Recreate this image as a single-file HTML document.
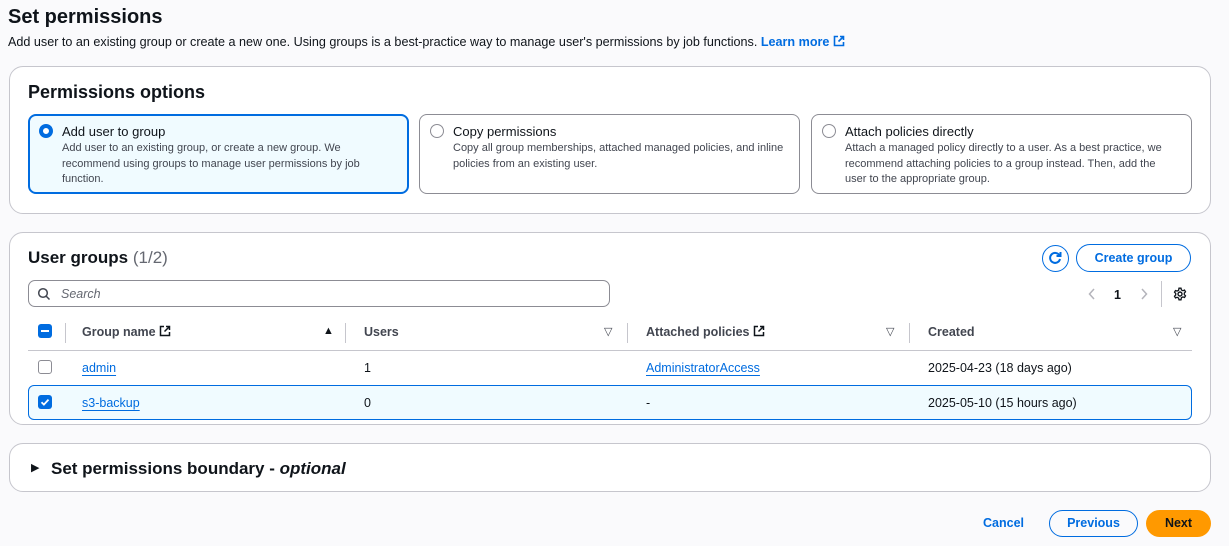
<!DOCTYPE html>
<html><head><meta charset="utf-8"><style>
*{box-sizing:border-box;margin:0;padding:0}
body{width:1229px;height:546px;background:#fafafc;font-family:"Liberation Sans",sans-serif;color:#0f141a;position:relative;overflow:hidden}
.a{position:absolute;white-space:nowrap}
.panel{position:absolute;background:#fff;border:1px solid #c6c6cd;border-radius:14px}
.card{position:absolute;top:114px;height:80px;width:381px;border:1px solid #8c8c94;border-radius:8px;background:#fff}
.card.sel{border:2px solid #006ce0;background:#f0fbff}
.radio{position:absolute;left:10px;top:9px;width:14px;height:14px;border-radius:50%;border:1px solid #8c8c94;background:#fff}
.sel .radio{border:4px solid #006ce0;left:9px;top:8px}
.ct{position:absolute;left:33px;top:9px;font-size:13px;white-space:nowrap}
.cd{position:absolute;left:33px;top:26px;font-size:11px;color:#424650;line-height:15.5px;white-space:nowrap}
.lnk{color:#006ce0;text-decoration:underline;text-underline-offset:3px}
.th{font-size:12.5px;font-weight:bold;color:#424650;top:325px}
.sep{position:absolute;top:323px;width:1px;height:20px;background:#c6c6cd}
.tri{position:absolute;font-size:11px;color:#424650;top:325px}
.cell{font-size:12.5px;position:absolute;white-space:nowrap}
.cb{position:absolute;width:14px;height:14px;border-radius:3px}
</style></head><body>
<div class="a" style="left:8px;top:6px;font-size:20px;font-weight:bold">Set permissions</div>
<div class="a" style="left:8px;top:35px;font-size:12.6px;color:#0f141a">Add user to an existing group or create a new one. Using groups is a best-practice way to manage user's permissions by job functions. <span style="color:#006ce0;font-weight:bold">Learn more</span> <svg width="12" height="12" viewBox="0 0 12 12" style="vertical-align:-1px"><path d="M5 1.5H1.5v9h9V7M7 1.5h3.5V5M10.5 1.5L5.5 6.5" fill="none" stroke="#006ce0" stroke-width="1.6"/></svg></div>

<div class="panel" style="left:9px;top:66px;width:1202px;height:148px"></div>
<div class="a" style="left:28px;top:82px;font-size:18px;font-weight:bold">Permissions options</div>
<div class="card sel" style="left:28px"><div class="radio"></div><div class="ct" style="left:32px;top:8px">Add user to group</div><div class="cd" style="left:32px;top:25px">Add user to an existing group, or create a new group. We<br>recommend using groups to manage user permissions by job<br>function.</div></div>
<div class="card" style="left:419px"><div class="radio"></div><div class="ct">Copy permissions</div><div class="cd">Copy all group memberships, attached managed policies, and inline<br>policies from an existing user.</div></div>
<div class="card" style="left:811px"><div class="radio"></div><div class="ct">Attach policies directly</div><div class="cd">Attach a managed policy directly to a user. As a best practice, we<br>recommend attaching policies to a group instead. Then, add the<br>user to the appropriate group.</div></div>

<div class="panel" style="left:9px;top:232px;width:1202px;height:193px"></div>
<div class="a" style="left:28px;top:248px;font-size:17px;font-weight:bold">User groups <span style="font-weight:normal;color:#656871">(1/2)</span></div>
<div class="a" style="left:1042px;top:245px;width:27px;height:27px;border:1.5px solid #006ce0;border-radius:50%"><svg width="24" height="24" viewBox="0 0 24 24"><path d="M16.5 9.5A5 5 0 1 0 17 13" fill="none" stroke="#006ce0" stroke-width="2"/><path d="M17.5 6v4h-4" fill="none" stroke="#006ce0" stroke-width="2"/></svg></div>
<div class="a" style="left:1076px;top:244px;width:115px;height:28px;border:1.5px solid #006ce0;border-radius:14px;color:#006ce0;font-weight:bold;font-size:12.5px;text-align:center;line-height:26px">Create group</div>
<div class="a" style="left:28px;top:280px;width:582px;height:27px;border:1px solid #8c8c94;border-radius:7px;background:#fff"></div>
<svg class="a" style="left:37px;top:287px" width="14" height="14" viewBox="0 0 14 14"><circle cx="6" cy="6" r="4.3" fill="none" stroke="#424650" stroke-width="1.5"/><path d="M9 9l3.5 3.5" stroke="#424650" stroke-width="1.5"/></svg>
<div class="a" style="left:61px;top:287px;font-size:12.5px;font-style:italic;color:#656871">Search</div>
<svg class="a" style="left:1088px;top:288px" width="8" height="12" viewBox="0 0 8 12"><path d="M6 1L1.5 6 6 11" fill="none" stroke="#b4b4bb" stroke-width="1.5"/></svg>
<div class="a" style="left:1114px;top:288px;font-size:12.5px;font-weight:bold">1</div>
<svg class="a" style="left:1140px;top:288px" width="8" height="12" viewBox="0 0 8 12"><path d="M2 1l4.5 5L2 11" fill="none" stroke="#b4b4bb" stroke-width="1.5"/></svg>
<div class="a" style="left:1161px;top:281px;width:1px;height:26px;background:#c6c6cd"></div>
<svg class="a" style="left:1173px;top:287px" width="14" height="14" viewBox="0 0 14 14"><circle cx="7" cy="7" r="2" fill="none" stroke="#0f141a" stroke-width="1.4"/><path d="M6 1.2h2l.4 1.7 1.5.8 1.6-.6 1 1.7-1.2 1.2v1.6l1.2 1.2-1 1.7-1.6-.6-1.5.8L8 12.8H6l-.4-1.7-1.5-.8-1.6.6-1-1.7 1.2-1.2V6.4L1.5 5.2l1-1.7 1.6.6 1.5-.8z" fill="none" stroke="#0f141a" stroke-width="1.3"/></svg>

<div class="cb" style="left:38px;top:324px;background:#006ce0"><div style="position:absolute;left:3px;top:6px;width:8px;height:2px;background:#fff"></div></div>
<div class="sep" style="left:65px"></div>
<div class="a th" style="left:82px">Group name <svg width="12" height="12" viewBox="0 0 12 12" style="vertical-align:-1px"><path d="M5 1.5H1.5v9h9V7M7 1.5h3.5V5M10.5 1.5L5.5 6.5" fill="none" stroke="#0f141a" stroke-width="1.5"/></svg></div>
<div class="tri" style="left:323px;color:#0f141a">&#9650;</div>
<div class="sep" style="left:345px"></div>
<div class="a th" style="left:364px">Users</div>
<div class="tri" style="left:604px">&#9661;</div>
<div class="sep" style="left:627px"></div>
<div class="a th" style="left:646px">Attached policies <svg width="12" height="12" viewBox="0 0 12 12" style="vertical-align:-1px"><path d="M5 1.5H1.5v9h9V7M7 1.5h3.5V5M10.5 1.5L5.5 6.5" fill="none" stroke="#0f141a" stroke-width="1.5"/></svg></div>
<div class="tri" style="left:886px">&#9661;</div>
<div class="sep" style="left:909px"></div>
<div class="a th" style="left:928px">Created</div>
<div class="tri" style="left:1173px">&#9661;</div>
<div class="a" style="left:28px;top:350px;width:1164px;height:1px;background:#c6c6cd"></div>

<div class="cb" style="left:38px;top:360px;border:1px solid #8c8c94;background:#fff"></div>
<div class="cell lnk" style="left:82px;top:361px">admin</div>
<div class="cell" style="left:364px;top:361px">1</div>
<div class="cell lnk" style="left:646px;top:361px">AdministratorAccess</div>
<div class="cell" style="left:928px;top:361px">2025-04-23 (18 days ago)</div>

<div class="a" style="left:28px;top:385px;width:1164px;height:35px;border:1px solid #006ce0;border-radius:6px;background:#f0fbff"></div>
<div class="cb" style="left:38px;top:395px;background:#006ce0"><svg width="14" height="14" viewBox="0 0 14 14" style="position:absolute;left:0;top:0"><path d="M3.5 7.2l2.4 2.4 4.6-5" fill="none" stroke="#fff" stroke-width="1.8"/></svg></div>
<div class="cell lnk" style="left:82px;top:396px">s3-backup</div>
<div class="cell" style="left:364px;top:396px">0</div>
<div class="cell" style="left:646px;top:396px">-</div>
<div class="cell" style="left:928px;top:396px">2025-05-10 (15 hours ago)</div>

<div class="panel" style="left:9px;top:443px;width:1202px;height:49px"></div>
<div class="a" style="left:31px;top:461px;font-size:11px">&#9654;</div>
<div class="a" style="left:51px;top:459px;font-size:17px;font-weight:bold">Set permissions boundary - <i>optional</i></div>

<div class="a" style="left:983px;top:516px;font-size:12.5px;font-weight:bold;color:#006ce0">Cancel</div>
<div class="a" style="left:1049px;top:510px;width:89px;height:27px;border:1.5px solid #006ce0;border-radius:14px;text-align:center;line-height:25px;font-size:12.5px;font-weight:bold;color:#006ce0">Previous</div>
<div class="a" style="left:1146px;top:510px;width:65px;height:27px;border-radius:14px;background:#ff9900;text-align:center;line-height:27px;font-size:12.5px;font-weight:bold;color:#0f141a">Next</div>
</body></html>
